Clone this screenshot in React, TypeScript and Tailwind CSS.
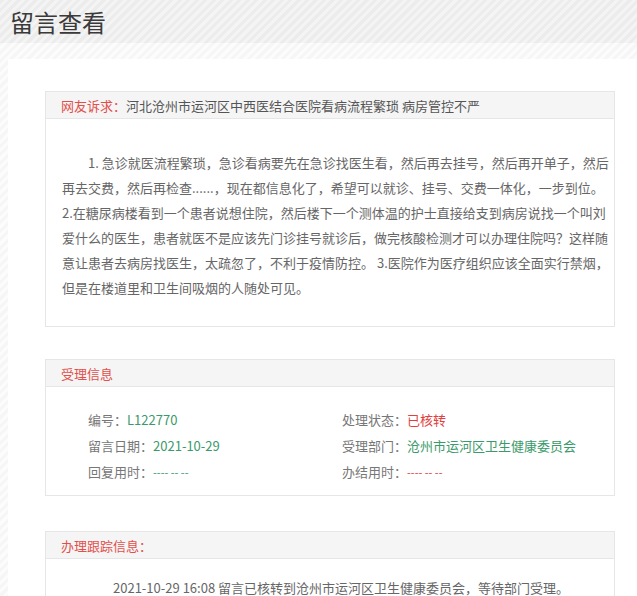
import React from "react";

const font = { fontFamily: '"Microsoft YaHei", "Noto Sans CJK SC", sans-serif' };

const paragraph = [
  "1. 急诊就医流程繁琐，急诊看病要先在急诊找医生看，然后再去挂号，然后再开单子，然后",
  "再去交费，然后再检查......，现在都信息化了，希望可以就诊、挂号、交费一体化，一步到位。",
  "2.在糖尿病楼看到一个患者说想住院，然后楼下一个测体温的护士直接给支到病房说找一个叫刘",
  "爱什么的医生，患者就医不是应该先门诊挂号就诊后，做完核酸检测才可以办理住院吗？这样随",
  "意让患者去病房找医生，太疏忽了，不利于疫情防控。 3.医院作为医疗组织应该全面实行禁烟，",
  "但是在楼道里和卫生间吸烟的人随处可见。",
];

const Section: React.FC<{ title: React.ReactNode; children: React.ReactNode }> = ({ title, children }) => (
  <div className="border border-[#e6e6e6] bg-white">
    <div className="h-[27px] bg-[#f5f5f5] border-b border-[#e6e6e6] pl-[15px] flex items-center text-[13px] leading-none">
      {title}
    </div>
    {children}
  </div>
);

const App: React.FC = () => {
  return (
    <div className="w-[637px] h-[596px] overflow-hidden bg-[repeating-linear-gradient(135deg,#f6f6f6_0,#f6f6f6_3px,#fcfcfc_3px,#fcfcfc_6px)]" style={font}>
      {/* title bar */}
      <div className="h-[43px] pl-[10px] flex items-center bg-[repeating-linear-gradient(135deg,#ececec_0,#ececec_3px,#f4f4f4_3px,#f4f4f4_6px)]">
        <h1 className="text-[24px] text-[#3a3a3a] leading-none">留言查看</h1>
      </div>

      <div className="mt-[16px] ml-[8px] bg-white h-[600px] pt-[32px] pl-[37px] pr-[14px]">
        <div className="w-[570px] flex flex-col">
          <Section
            title={
              <>
                <span className="text-[#e2504c]">网友诉求：</span>
                <span className="text-[#555]">河北沧州市运河区中西医结合医院看病流程繁琐 病房管控不严</span>
              </>
            }
          >
            <div className="pt-[31px] pb-[26px] pl-[16px] text-[13px] leading-[25px] text-[#666]">
              {paragraph.map((line, i) => (
                <div key={i} className={i === 0 ? "whitespace-nowrap pl-[26px]" : "whitespace-nowrap"}>
                  {line}
                </div>
              ))}
            </div>
          </Section>

          <div className="mt-[32px]">
            <Section title={<span className="text-[#e2504c]">受理信息</span>}>
              <div className="pt-[20px] pb-[10px] pl-[42px] grid grid-cols-[254px_1fr] text-[13px] leading-[26px] text-[#777]">
                <div>
                  编号：<span className="text-[#3a9a6a]">L122770</span>
                </div>
                <div>
                  处理状态：<span className="text-[#e2403c]">已核转</span>
                </div>
                <div>
                  留言日期：<span className="text-[#3a9a6a]">2021-10-29</span>
                </div>
                <div>
                  受理部门：<span className="text-[#3a9a6a]">沧州市运河区卫生健康委员会</span>
                </div>
                <div>
                  回复用时：<span className="text-[#3a9a6a] text-[11px]">---- -- --</span>
                </div>
                <div>
                  办结用时：<span className="text-[#e2403c] text-[11px]">---- -- --</span>
                </div>
              </div>
            </Section>
          </div>

          <div className="mt-[35px]">
            <Section title={<span className="text-[#e2504c]">办理跟踪信息：</span>}>
              <div className="pt-[20px] pl-[67px] text-[13px] leading-[18px] text-[#666] whitespace-nowrap">
                2021-10-29 16:08 留言已核转到沧州市运河区卫生健康委员会，等待部门受理。
              </div>
            </Section>
          </div>
        </div>
      </div>
    </div>
  );
};

export default App;
